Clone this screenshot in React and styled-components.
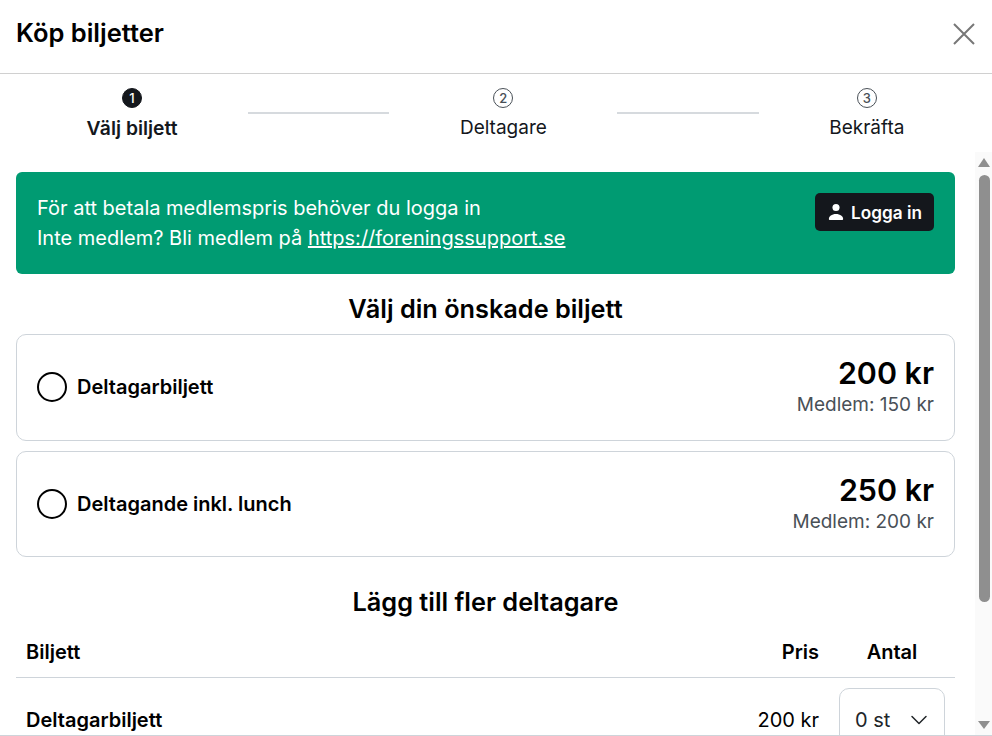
import React from 'react';
import styled, { createGlobalStyle } from 'styled-components';
import { ChevronDown } from 'lucide-react';

const GlobalStyle = createGlobalStyle`
  html, body {
    margin: 0;
    padding: 0;
    height: 100%;
    overflow: hidden;
    background: #fff;
  }
  body {
    font-family: Inter, "Liberation Sans", sans-serif;
    color: #000;
  }
  * { box-sizing: border-box; }
`;

const Modal = styled.div`
  width: 992px;
  height: 736px;
  display: flex;
  flex-direction: column;
  overflow: hidden;
  border-bottom: 1px solid #ced4da;
`;

const Header = styled.header`
  flex: none;
  height: 74px;
  padding: 0 16px;
  display: flex;
  align-items: center;
  justify-content: space-between;
  border-bottom: 1px solid #d0d0d0;
`;

const Title = styled.h1`
  margin: 0 0 8px;
  font-size: 25.5px;
  line-height: 36px;
  font-weight: 600;
`;

const CloseButton = styled.button`
  width: 22px;
  height: 22px;
  margin: 0 1px 6px 0;
  padding: 0;
  border: 0;
  background: none;
  color: #777;
  display: flex;
`;

const Stepper = styled.nav`
  flex: none;
  height: 78px;
  padding: 0 17px 0 16px;
  display: flex;
  align-items: flex-start;
`;

const Step = styled.div`
  flex: 1 1 auto;
  padding-top: 14px;
  display: flex;
  flex-direction: column;
  align-items: center;
  font-size: ${(p) => (p.$active ? '19.3px' : '19px')};
  line-height: 28px;
  font-weight: ${(p) => (p.$active ? 600 : 400)};
  color: #14171c;
`;

const StepNumber = styled.span`
  width: 20px;
  height: 20px;
  margin-bottom: 5.5px;
  border-radius: 50%;
  border: 1px solid #495057;
  background: ${(p) => (p.$active ? '#14171c' : 'transparent')};
  border-color: ${(p) => (p.$active ? '#14171c' : '#495057')};
  color: ${(p) => (p.$active ? '#fff' : '#495057')};
  font-size: 13px;
  line-height: 18px;
  font-weight: 500;
  text-align: center;
`;

const StepLine = styled.div`
  flex: 1 1 0;
  height: 2px;
  margin-top: 38px;
  background: #d6dade;
`;

const Body = styled.div`
  flex: 1;
  min-height: 0;
  display: flex;
`;

const Content = styled.main`
  flex: 1;
  min-width: 0;
  padding: 20px 20px 0 16px;
  overflow: hidden;
`;

const Banner = styled.section`
  height: 102px;
  padding: 21px;
  display: flex;
  align-items: flex-start;
  justify-content: space-between;
  border-radius: 6px;
  background: #009b72;
  color: #fff;
  font-size: 20px;
  line-height: 30px;

  a { color: #fff; text-decoration: underline; }
`;

const LoginButton = styled.button`
  height: 38px;
  padding: 0 12px 0 13px;
  display: flex;
  align-items: center;
  gap: 7px;
  border: 0;
  border-radius: 5px;
  background: #14171c;
  color: #fff;
  font: 600 17.2px Inter, sans-serif;
`;

const SectionTitle = styled.h2`
  margin: ${(p) => p.$top}px 0 ${(p) => p.$bottom}px;
  font-size: 25.3px;
  line-height: 36px;
  font-weight: 600;
  text-align: center;
`;

const TicketList = styled.div`
  display: flex;
  flex-direction: column;
  gap: 10px;
`;

const TicketCard = styled.label`
  height: 106.5px;
  padding: 0 20px;
  display: flex;
  align-items: center;
  justify-content: space-between;
  border: 1px solid #ced4da;
  border-radius: 10px;
`;

const TicketName = styled.div`
  display: flex;
  align-items: center;
  gap: 10px;
  font-size: 20px;
  font-weight: 600;
`;

const Radio = styled.span`
  width: 30px;
  height: 30px;
  border: 2px solid #000;
  border-radius: 50%;
`;

const PriceBlock = styled.div`
  text-align: right;
`;

const Price = styled.div`
  margin: -1px 0 1px;
  font-size: 30.4px;
  line-height: 36px;
  font-weight: 600;
`;

const MemberPrice = styled.div`
  font-size: 19px;
  line-height: 26px;
  color: #495057;
`;

const Table = styled.div`
  font-size: 20px;
`;

const TableRow = styled.div`
  display: grid;
  grid-template-columns: 1fr 90px 126px;
  align-items: center;
  height: ${(p) => p.$height}px;
  ${(p) => p.$head && 'padding-top: 6px; border-bottom: 1px solid #ced4da; font-weight: 600;'}
`;

const NameCell = styled.div`
  padding: 0 10px;
  font-weight: 600;
`;

const PriceCell = styled.div`
  padding: 0 10px;
  text-align: right;
`;

const QtyCell = styled.div`
  padding: 0 10px;
  text-align: center;
`;

const QtySelect = styled.div`
  height: 64px;
  padding: 0 11px 0 15px;
  display: flex;
  align-items: center;
  justify-content: space-between;
  border: 1px solid #ced4da;
  border-radius: 10px;
  color: #212529;
`;

const Scrollbar = styled.aside`
  flex: none;
  width: 17px;
  display: flex;
  flex-direction: column;
  align-items: center;
  background: #fafafa;
  padding: 0 0 0 1px;
`;

const ScrollArrow = styled.span`
  flex: none;
  width: 0;
  height: 0;
  margin: ${(p) => (p.$down ? '6px 0 6px' : '6px 0 8px')};
  border-left: 6.5px solid transparent;
  border-right: 6.5px solid transparent;
  ${(p) => (p.$down ? 'border-top: 8px' : 'border-bottom: 9px')} solid #8f8f8f;
`;

const ScrollTrack = styled.div`
  flex: 1;
  width: 100%;
  display: flex;
  justify-content: center;
`;

const ScrollThumb = styled.div`
  width: 11px;
  height: 427px;
  border-radius: 6px;
  background: #8f8f8f;
`;

const UserIcon = () => (
  <svg width="16" height="16" viewBox="1.6 1.5 12.8 13.5" fill="currentColor">
    <path d="M11 4.5a3 3 0 1 1-6 0 3 3 0 0 1 6 0z" />
    <path d="M2 14.2C2 12 4.4 10 8 10s6 2 6 4.2c0 .5-.4.8-.9.8H2.9c-.5 0-.9-.3-.9-.8z" />
  </svg>
);

const CloseIcon = () => (
  <svg width="22" height="22" viewBox="0 0 22 22" fill="none" stroke="currentColor" strokeWidth="2">
    <path d="M1 1l20 20M21 1L1 21" />
  </svg>
);

const steps = ['Välj biljett', 'Deltagare', 'Bekräfta'];

const tickets = [
  { name: 'Deltagarbiljett', price: '200 kr', member: 'Medlem: 150 kr' },
  { name: 'Deltagande inkl. lunch', price: '250 kr', member: 'Medlem: 200 kr' },
];

export default function App() {
  return (
    <Modal>
      <GlobalStyle />
      <Header>
        <Title>Köp biljetter</Title>
        <CloseButton aria-label="Stäng">
          <CloseIcon />
        </CloseButton>
      </Header>

      <Stepper>
        {steps.map((label, i) => (
          <React.Fragment key={label}>
            {i > 0 && <StepLine />}
            <Step $active={i === 0}>
              <StepNumber $active={i === 0}>{i + 1}</StepNumber>
              {label}
            </Step>
          </React.Fragment>
        ))}
      </Stepper>

      <Body>
        <Content>
          <Banner>
            <div>
              För att betala medlemspris behöver du logga in
              <br />
              Inte medlem? Bli medlem på <a href="#medlem">https://foreningssupport.se</a>
            </div>
            <LoginButton>
              <UserIcon />
              Logga in
            </LoginButton>
          </Banner>

          <SectionTitle $top={17} $bottom={7}>Välj din önskade biljett</SectionTitle>
          <TicketList>
            {tickets.map((t) => (
              <TicketCard key={t.name}>
                <TicketName>
                  <Radio />
                  {t.name}
                </TicketName>
                <PriceBlock>
                  <Price>{t.price}</Price>
                  <MemberPrice>{t.member}</MemberPrice>
                </PriceBlock>
              </TicketCard>
            ))}
          </TicketList>

          <SectionTitle $top={27} $bottom={1}>Lägg till fler deltagare</SectionTitle>
          <Table>
            <TableRow $head $height={57}>
              <NameCell>Biljett</NameCell>
              <PriceCell>Pris</PriceCell>
              <QtyCell>Antal</QtyCell>
            </TableRow>
            <TableRow $height={84}>
              <NameCell>Deltagarbiljett</NameCell>
              <PriceCell>200 kr</PriceCell>
              <QtyCell>
                <QtySelect>
                  0 st
                  <ChevronDown size={28} strokeWidth={1.5} absoluteStrokeWidth />
                </QtySelect>
              </QtyCell>
            </TableRow>
          </Table>
        </Content>

        <Scrollbar>
          <ScrollArrow />
          <ScrollTrack>
            <ScrollThumb />
          </ScrollTrack>
          <ScrollArrow $down />
        </Scrollbar>
      </Body>
    </Modal>
  );
}
